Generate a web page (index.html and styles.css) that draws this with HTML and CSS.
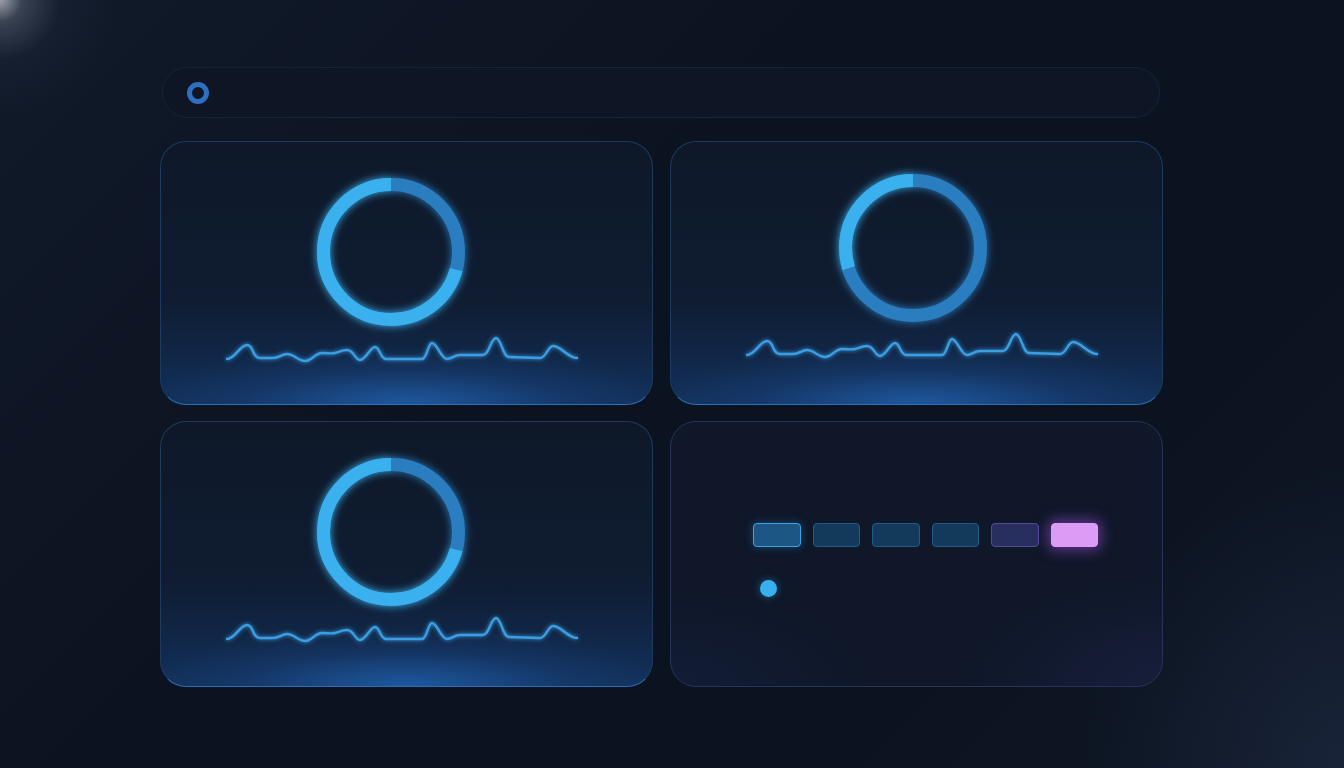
FILE: index.html
```html
<!DOCTYPE html>
<html>
<head>
<meta charset="utf-8">
<link rel="stylesheet" href="styles.css">
</head>
<body>
<div class="page">
  <div class="search">
    <svg class="search-icon" width="26" height="26" viewBox="0 0 26 26"><circle cx="13" cy="13" r="8.5" fill="none" stroke="#2f6fc0" stroke-width="5"/></svg>
  </div>
  <div class="grid">
    <div class="card card-blue">
      <svg class="canvas" viewBox="0 0 493 265" width="493" height="265">
        <defs>
          <filter id="glow" x="-30%" y="-30%" width="160%" height="160%"><feGaussianBlur stdDeviation="4" result="b"/><feMerge><feMergeNode in="b"/><feMergeNode in="SourceGraphic"/></feMerge></filter>
          <filter id="glow2" x="-10%" y="-100%" width="120%" height="300%"><feGaussianBlur stdDeviation="2" result="b"/><feMerge><feMergeNode in="b"/><feMergeNode in="SourceGraphic"/></feMerge></filter>
        </defs>
        <g filter="url(#glow)">
          <circle cx="231" cy="111" r="67.5" fill="none" stroke="#2a7dbf" stroke-width="13"/>
          <circle cx="231" cy="111" r="67.5" fill="none" stroke="#3ab0ee" stroke-width="13" stroke-dasharray="300.4 424.1" stroke-dashoffset="-123.7" transform="rotate(-90 231 111)"/>
        </g>
        <path filter="url(#glow2)" class="wave" d="M67 218 C75 218 80 204 87 204 C94 204 92 217 100 217 L113 217 C119 217 122 213 127 213 C134 213 138 220 145 220 C152 220 155 212 162 212 C168 212 170 213 175 212 C180 211 182 209 187 209 C194 209 195 219 200 219 C206 219 210 206 215 206 C220 206 220 218 226 218 L262 218 C267 218 268 202 272 202 C277 202 281 218 287 218 C292 218 294 214 300 214 L323 214 C329 214 331 197 336 197 C341 197 343 216 349 216 L380 217 C386 217 388 205 393 205 C401 205 408 217 417 217"/>
      </svg>
    </div>
    <div class="card card-blue">
      <svg class="canvas" viewBox="0 0 493 265" width="493" height="265">
        <g filter="url(#glow)">
          <circle cx="243" cy="107" r="67.5" fill="none" stroke="#2a7dbf" stroke-width="13"/>
          <circle cx="243" cy="107" r="67.5" fill="none" stroke="#3ab0ee" stroke-width="13" stroke-dasharray="127.2 424.1" stroke-dashoffset="-296.9" transform="rotate(-90 243 107)"/>
        </g>
        <path filter="url(#glow2)" class="wave" transform="translate(10 -4)" d="M67 218 C75 218 80 204 87 204 C94 204 92 217 100 217 L113 217 C119 217 122 213 127 213 C134 213 138 220 145 220 C152 220 155 212 162 212 C168 212 170 213 175 212 C180 211 182 209 187 209 C194 209 195 219 200 219 C206 219 210 206 215 206 C220 206 220 218 226 218 L262 218 C267 218 268 202 272 202 C277 202 281 218 287 218 C292 218 294 214 300 214 L323 214 C329 214 331 197 336 197 C341 197 343 216 349 216 L380 217 C386 217 388 205 393 205 C401 205 408 217 417 217"/>
      </svg>
    </div>
    <div class="card card-blue">
      <svg class="canvas" viewBox="0 0 493 265" width="493" height="265">
        <g filter="url(#glow)">
          <circle cx="231" cy="111" r="67.5" fill="none" stroke="#2a7dbf" stroke-width="13"/>
          <circle cx="231" cy="111" r="67.5" fill="none" stroke="#3ab0ee" stroke-width="13" stroke-dasharray="300.4 424.1" stroke-dashoffset="-123.7" transform="rotate(-90 231 111)"/>
        </g>
        <path filter="url(#glow2)" class="wave" d="M67 218 C75 218 80 204 87 204 C94 204 92 217 100 217 L113 217 C119 217 122 213 127 213 C134 213 138 220 145 220 C152 220 155 212 162 212 C168 212 170 213 175 212 C180 211 182 209 187 209 C194 209 195 219 200 219 C206 219 210 206 215 206 C220 206 220 218 226 218 L262 218 C267 218 268 202 272 202 C277 202 281 218 287 218 C292 218 294 214 300 214 L323 214 C329 214 331 197 336 197 C341 197 343 216 349 216 L380 217 C386 217 388 205 393 205 C401 205 408 217 417 217"/>
      </svg>
    </div>
    <div class="card card-steps">
      <div class="steps">
        <div class="step step-active"></div>
        <div class="step"></div>
        <div class="step"></div>
        <div class="step"></div>
        <div class="step step-violet"></div>
        <div class="step step-pink"></div>
      </div>
      <div class="dot"></div>
    </div>
  </div>
</div>
</body>
</html>
```

FILE: styles.css
```css
html, body {
  margin: 0;
  padding: 0;
}
body {
  width: 1344px;
  height: 768px;
  overflow: hidden;
  font-family: "Inter", "Liberation Sans", sans-serif;
  background:
    radial-gradient(circle at 0 0, rgba(215, 218, 225, 0.7) 0, rgba(150, 158, 175, 0.3) 22px, rgba(60, 70, 90, 0.12) 60px, rgba(30, 40, 60, 0) 120px),
    radial-gradient(ellipse 260px 300px at 100% 100%, rgba(35, 48, 75, 0.5) 0, rgba(20, 30, 50, 0) 100%),
    linear-gradient(135deg, #111a2a 0%, #0c1320 40%, #0c1320 75%, #0f1726 100%);
}
.page {
  width: 1003px;
  margin-left: 160px;
  padding-top: 67px;
}
.search {
  height: 49px;
  margin: 0 3px 0 2px;
  border: 1px solid #172338;
  border-radius: 26px;
  background: #0e1626;
  display: flex;
  align-items: center;
  padding-left: 22px;
}
.search-icon {
  display: block;
}
.grid {
  margin-top: 23px;
  display: grid;
  grid-template-columns: 493px 493px;
  grid-template-rows: 264px 266px;
  column-gap: 17px;
  row-gap: 16px;
}
.card {
  box-sizing: border-box;
  border-radius: 26px;
  position: relative;
  overflow: hidden;
}
.card-blue {
  border: 1px solid #1d3a5f;
  border-bottom-color: #2c6db3;
  background:
    radial-gradient(ellipse 55% 22% at 50% 100%, rgba(40, 120, 215, 0.55) 0, rgba(30, 90, 170, 0.2) 60%, rgba(20, 60, 120, 0) 100%),
    linear-gradient(180deg, #0e1829 0%, #0f1c31 60%, #12305a 100%);
}
.canvas {
  display: block;
  position: absolute;
  left: -1px;
  top: -1px;
}
.wave {
  fill: none;
  stroke: #3a9de2;
  stroke-width: 2.4;
  stroke-linecap: round;
  stroke-linejoin: round;
}
.card-steps {
  border: 1px solid #27335a;
  background:
    radial-gradient(ellipse 40% 40% at 100% 100%, rgba(55, 55, 120, 0.22) 0, rgba(40, 40, 90, 0) 100%),
    radial-gradient(ellipse 40% 35% at 0% 100%, rgba(30, 50, 100, 0.2) 0, rgba(30, 50, 100, 0) 100%),
    #0f1729;
  padding: 101px 0 0 82px;
  display: flex;
  flex-direction: column;
}
.steps {
  display: flex;
  gap: 12px;
}
.step {
  box-sizing: border-box;
  width: 47.5px;
  height: 24px;
  border-radius: 4px;
  border: 1.5px solid #1f5c8a;
  background: #143a5b;
}
.step-active {
  border-color: #3aa4e6;
  background: #1c5684;
  box-shadow: 0 0 8px rgba(58, 164, 230, 0.35);
}
.step-violet {
  border-color: #54489a;
  background: #262f5e;
}
.step-pink {
  border-color: #dc9df6;
  background: #dc9cf5;
  box-shadow: 0 0 14px 3px rgba(170, 80, 230, 0.55);
}
.dot {
  width: 17px;
  height: 17px;
  border-radius: 50%;
  background: #38b0f0;
  margin: 33px 0 0 7px;
  box-shadow: 0 0 8px rgba(56, 176, 240, 0.45);
}
```
